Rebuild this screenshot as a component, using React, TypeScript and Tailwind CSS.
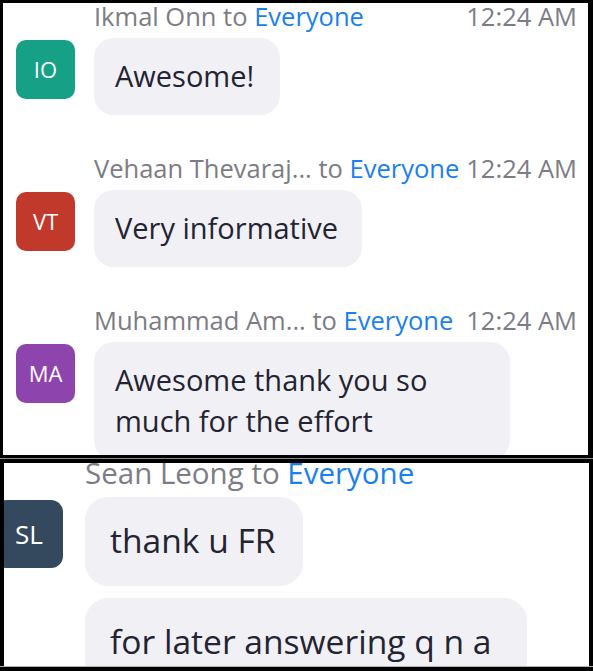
const font = { fontFamily: '"Open Sans", "Noto Sans", sans-serif' };

type Msg = {
  initials: string;
  avatar: string;
  name: string;
  lines: string[];
  width: string;
};

const TOP_MESSAGES: Msg[] = [
  { initials: "IO", avatar: "bg-[#16a085]", name: "Ikmal Onn", lines: ["Awesome!"], width: "w-[186px]" },
  { initials: "VT", avatar: "bg-[#c0392b]", name: "Vehaan Thevaraj...", lines: ["Very informative"], width: "w-[268px]" },
  {
    initials: "MA",
    avatar: "bg-[#8e44ad]",
    name: "Muhammad Am...",
    lines: ["Awesome thank you so", "much for the effort"],
    width: "w-[416px]",
  },
];

function Header({ name, time, className }: { name: string; time?: string; className: string }) {
  return (
    <div className={`flex justify-between whitespace-nowrap text-[#7c7c84] ${className}`}>
      <span>
        {name} to <span className="text-[#1a7ff0]">Everyone</span>
      </span>
      {time && <span>{time}</span>}
    </div>
  );
}

function TopMessage({ msg, first }: { msg: Msg; first: boolean }) {
  return (
    <div className={first ? "" : "mt-[39px]"}>
      <Header
        name={msg.name}
        time="12:24 AM"
        className="ml-[78px] text-[25.5px] leading-[28px] mb-[8px]"
      />
      <div className="flex items-start gap-[19px]">
        <div
          className={`mt-[2px] flex h-[59px] w-[59px] shrink-0 items-center justify-center rounded-[10px] text-[22px] text-white ${msg.avatar}`}
        >
          {msg.initials}
        </div>
        <div
          className={`rounded-[20px] bg-[#f1f1f5] pl-[21px] pt-[17px] pb-[19px] text-[29px] leading-[41px] text-[#232333] whitespace-nowrap ${msg.width}`}
        >
          {msg.lines.map((l) => (
            <div key={l}>{l}</div>
          ))}
        </div>
      </div>
    </div>
  );
}

export default function App() {
  return (
    <div className="h-[671px] w-[593px] overflow-hidden bg-black" style={font}>
      <div className="ml-[3px] mt-[3px] h-[452px] w-[585px] overflow-hidden bg-white">
        <div className="-mt-[1px] pl-[13px] pr-[11px]">
          {TOP_MESSAGES.map((m, i) => (
            <TopMessage key={m.initials} msg={m} first={i === 0} />
          ))}
        </div>
      </div>
      <div className="h-[3px]" />
      <div className="h-[1px] bg-[#8a8a8a]" />
      <div className="h-[4px]" />
      <div className="ml-[4px] h-[203px] w-[585px] overflow-hidden bg-white">
        <div className="-mt-[6px]">
          <Header name="Sean Leong" className="ml-[81px] text-[29.5px] leading-[32px] mb-[8px]" />
          <div className="flex items-start gap-[22px]">
            <div className="-ml-[9px] mt-[3px] flex h-[68px] w-[68px] shrink-0 items-center justify-center rounded-[12px] bg-[#34495e] text-[26px] text-white">
              SL
            </div>
            <div className="flex flex-col gap-[12px] text-[33.6px] leading-[46px] text-[#232333] whitespace-nowrap">
              <div className="w-[218px] rounded-[23px] bg-[#f1f1f5] pl-[25px] pt-[20px] pb-[23px]">thank u FR</div>
              <div className="w-[442px] rounded-[23px] bg-[#f1f1f5] pl-[25px] pt-[20px] pb-[23px]">
                for later answering q n a
              </div>
            </div>
          </div>
        </div>
      </div>
      <div className="h-[1px] bg-[#b0b0b0]" />
    </div>
  );
}
